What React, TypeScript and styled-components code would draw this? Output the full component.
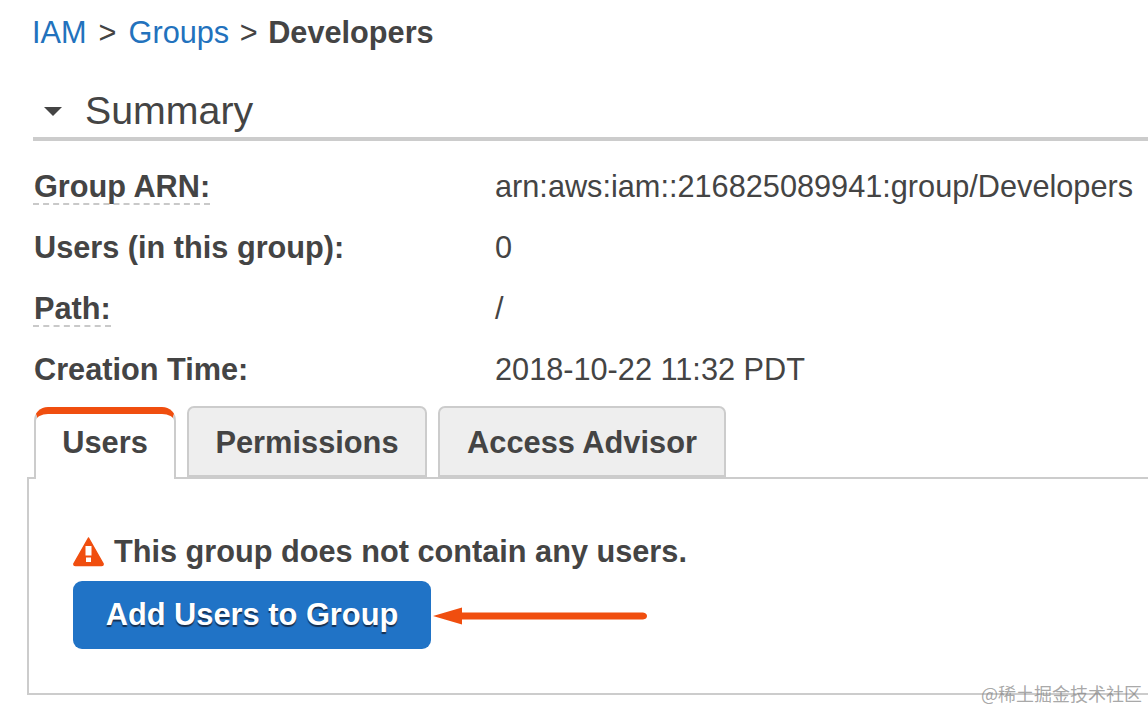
import React from "react";
import styled, { createGlobalStyle } from "styled-components";

const Global = createGlobalStyle`
  html, body { margin: 0; padding: 0; background: #fff; overflow: hidden; }
  body { font-family: "Liberation Sans", Arial, sans-serif; color: #444; }
`;

const Page = styled.div`
  position: relative;
  width: 1148px;
  height: 711px;
  overflow: hidden;
  box-sizing: border-box;
  padding: 14px 0 0 33px;
`;

const Breadcrumb = styled.nav`
  display: flex;
  align-items: baseline;
  height: 37px;
  line-height: 37px;
  margin-left: -1px;
  font-size: 30.7px;
  white-space: nowrap;
`;

const Crumb = styled.a`
  color: #2272bd;
  text-decoration: none;
`;

const Sep = styled.span<{ $w: number }>`
  width: ${(p) => p.$w}px;
  text-align: center;
  color: #444;
`;

const Current = styled.strong`
  font-weight: 700;
  color: #444;
`;

const SummaryHead = styled.div`
  display: flex;
  align-items: center;
  height: 61px;
  margin-top: 29px;
  margin-right: -40px;
  box-sizing: border-box;
  padding: 3px 0 0 11px;
  border-bottom: 4px solid #cccccc;
`;

const Caret = styled.span`
  width: 0;
  height: 0;
  margin: 2px 23px 0 0;
  border-left: 9px solid transparent;
  border-right: 9px solid transparent;
  border-top: 9px solid #444;
`;

const SummaryTitle = styled.h2`
  margin: 0;
  font-size: 39.3px;
  font-weight: 400;
  color: #444;
`;

const Rows = styled.dl`
  margin: 16px 0 0 1px;
  display: grid;
  grid-template-columns: 461px 1fr;
  grid-auto-rows: 61px;
  white-space: nowrap;
`;

const Label = styled.dt`
  font-size: 30.7px;
  font-weight: 700;
  color: #444;
  line-height: 34px;
  padding-top: 13px;
`;

const Dashed = styled.span`
  display: inline-block;
  line-height: 34px;
  border-bottom: 2px dashed #c9c9c9;
  margin-left: -1px;
  padding-left: 1px;
  height: 33px;
`;

const Value = styled.dd`
  margin: 0;
  font-size: 30.7px;
  color: #444;
  line-height: 34px;
  padding-top: 13px;
`;

const Tabs = styled.div`
  display: flex;
  align-items: flex-end;
  gap: 11px;
  margin: 5px 0 0 1px;
  position: relative;
  z-index: 1;
`;

const Tab = styled.div<{ $active?: boolean; $w: number }>`
  box-sizing: border-box;
  width: ${(p) => p.$w}px;
  height: ${(p) => (p.$active ? 72 : 71)}px;
  margin-bottom: ${(p) => (p.$active ? "-2px" : "0")};
  padding-top: ${(p) => (p.$active ? "7px" : "13px")};
  text-align: center;
  font-size: 30.8px;
  font-weight: 700;
  line-height: 44px;
  color: #444;
  white-space: nowrap;
  background: ${(p) => (p.$active ? "#fff" : "#eeeeee")};
  border: 2px solid #cccccc;
  border-bottom: ${(p) => (p.$active ? "none" : "2px solid #cccccc")};
  border-top: ${(p) => (p.$active ? "7px solid #f04e0f" : "2px solid #cccccc")};
  border-radius: ${(p) => (p.$active ? "14px 14px 0 0" : "7px 7px 0 0")};
`;

const Panel = styled.section`
  box-sizing: border-box;
  width: 1200px;
  height: 218px;
  margin-left: -6px;
  border: 2px solid #cccccc;
  padding: 55px 0 0 44px;
`;

const Warning = styled.div`
  display: flex;
  align-items: center;
  gap: 10px;
  height: 36px;
  font-size: 30.7px;
  font-weight: 700;
  color: #444;
  white-space: nowrap;
`;

const ActionRow = styled.div`
  display: flex;
  align-items: center;
  margin-top: 11px;
`;

const PrimaryButton = styled.button`
  box-sizing: border-box;
  width: 358px;
  height: 68px;
  border: none;
  border-radius: 9px;
  padding: 0;
  background: #2073c6;
  color: #fff;
  font-family: "Liberation Sans", Arial, sans-serif;
  font-size: 30.8px;
  font-weight: 700;
  text-align: center;
  text-shadow: 0 2px 1px rgba(20, 30, 50, 0.8);
`;

const Arrow = styled.svg`
  display: block;
  margin: 2px 0 0 1px;
`;

const Watermark = styled.div`
  position: absolute;
  right: 6px;
  bottom: 6px;
  font-family: "Noto Sans CJK SC", "Liberation Sans", sans-serif;
  font-size: 18px;
  line-height: 24px;
  color: rgba(130, 130, 130, 0.7);
  white-space: nowrap;
`;

export default function App() {
  return (
    <>
      <Global />
      <Page>
        <Breadcrumb>
          <Crumb>IAM</Crumb>
          <Sep $w={42}>&gt;</Sep>
          <Crumb>Groups</Crumb>
          <Sep $w={39}>&gt;</Sep>
          <Current>Developers</Current>
        </Breadcrumb>
        <SummaryHead>
          <Caret />
          <SummaryTitle>Summary</SummaryTitle>
        </SummaryHead>
        <Rows>
          <Label><Dashed>Group ARN:</Dashed></Label>
          <Value>arn:aws:iam::216825089941:group/Developers</Value>
          <Label>Users (in this group):</Label>
          <Value>0</Value>
          <Label><Dashed>Path:</Dashed></Label>
          <Value>/</Value>
          <Label>Creation Time:</Label>
          <Value>2018-10-22 11:32 PDT</Value>
        </Rows>
        <Tabs>
          <Tab $active $w={142}>Users</Tab>
          <Tab $w={240}>Permissions</Tab>
          <Tab $w={288}>Access Advisor</Tab>
        </Tabs>
        <Panel>
          <Warning>
            <svg width="31" height="30" viewBox="0 0 31 30">
              <path d="M15.5 1 L30 26.5 Q30.5 28.5 28.5 28.5 L2.5 28.5 Q0.5 28.5 1 26.5 Z" fill="#f04e0f" stroke="#f04e0f" strokeWidth="1.5" strokeLinejoin="round" />
              <rect x="12.5" y="9" width="6" height="9.5" fill="#fff" />
              <rect x="13" y="20.5" width="5" height="4.5" fill="#fff" />
            </svg>
            This group does not contain any users.
          </Warning>
          <ActionRow>
            <PrimaryButton>Add Users to Group</PrimaryButton>
            <Arrow width="216" height="24" viewBox="0 0 216 24">
              <path d="M1 12 L30 3.5 L30 8.5 L211 8.5 Q215 9 215 12 Q215 15 211 15.5 L30 15.5 L30 20.5 Z" fill="#f04e0f" />
            </Arrow>
          </ActionRow>
        </Panel>
        <Watermark>@稀土掘金技术社区</Watermark>
      </Page>
    </>
  );
}
